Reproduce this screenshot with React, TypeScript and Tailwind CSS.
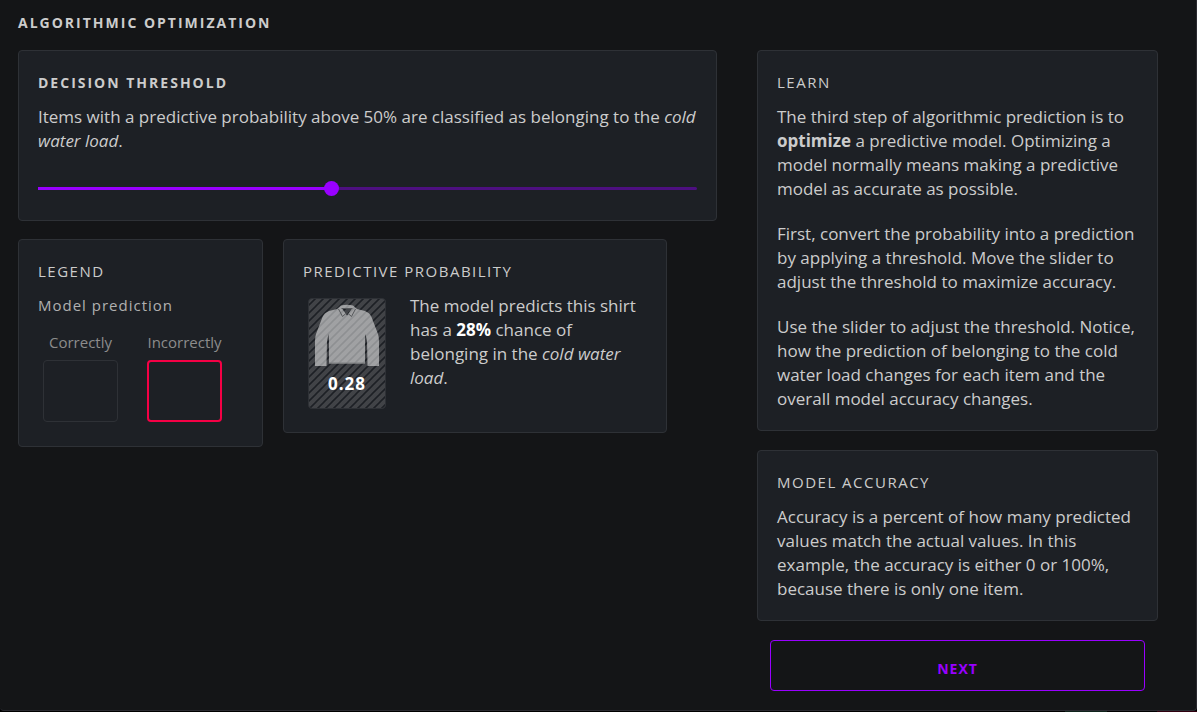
import { useState } from "react";
import type { ReactNode } from "react";

type CardProps = {
  id: string;
  title: string;
  bold?: boolean;
  className?: string;
  children: ReactNode;
};

function Card({ id, title, bold = false, className = "", children }: CardProps) {
  return (
    <section aria-labelledby={id} className={`rounded border border-[#2e3136] bg-[#1d2025] px-[19px] pt-5 ${className}`}>
      <h2 id={id} className={`uppercase ${bold ? "mb-[10px] text-sm leading-6 font-bold tracking-[2px]" : "mb-3 text-[15px] leading-[22px] font-normal tracking-[1.5px]"}`}>
        {title}
      </h2>
      {children}
    </section>
  );
}

function ShirtTile({ value }: { value: string }) {
  return (
    <div className="relative mt-1 ml-[5px] flex h-[111px] w-[78px] shrink-0 items-end justify-center overflow-hidden rounded border border-[#2e3136] bg-[#414347] pb-3">
      <svg viewBox="0 0 78 111" className="absolute -inset-px h-[111px] w-[78px]" aria-hidden="true">
        <defs>
          <pattern id="hatch" width="8" height="8" patternUnits="userSpaceOnUse">
            <path d="M-1 1 L1 -1 M-1 9 L9 -1 M7 9 L9 7" stroke="#1d2025" strokeWidth="1.6" />
          </pattern>
        </defs>
        <rect width="78" height="111" fill="url(#hatch)" />
        <g fill="#ffffff" fillOpacity="0.5">
          <path
            fillRule="evenodd"
            d="M33 7.5 Q39 6 45 7.5 L49 11 L57 13 Q62 15 63.5 19 L70 36 Q71 39 71 43 L71 68 L59.5 68 L59 43 L57.5 36 L57 41 L57 65.5 L21 65.5 L21 41 L20.5 36 L19 43 L18.5 68 L7 68 L7 43 Q7 39 8 36 L14.5 19 Q16 15 21 13 L29 11 Z M34 10.5 L39 17.5 L44 10.5 Z"
          />
        </g>
        <path d="M30.5 11 L34.5 18.5 L38.5 15 M47.5 11 L43.5 18.5 L39.5 15 M33.5 10.5 L44.5 10.5" fill="none" stroke="#55575a" strokeWidth="1" />
        <path d="M21 65 H57" stroke="#7d7e80" strokeWidth="1" />
      </svg>
      <strong className="relative text-[17px] leading-6 font-bold tracking-[1px] text-white">{value}</strong>
    </div>
  );
}

function LegendItem({ label, boxClass }: { label: string; boxClass: string }) {
  return (
    <li className="flex w-[75px] flex-col items-center gap-[7px]">
      <span className="text-[15px] leading-[22px] whitespace-nowrap">{label}</span>
      <span className={`h-[62px] w-full rounded ${boxClass}`} />
    </li>
  );
}

const MIN = 10;
const MAX = 100;

export default function App() {
  const [threshold, setThreshold] = useState(50);
  const filled = ((threshold - MIN) / (MAX - MIN)) * 100;

  return (
    <div className="flex min-h-screen flex-col bg-black font-['Open_Sans',sans-serif] text-[17px] leading-6 text-[#cccccc]">
      <main className="flex-1 rounded-b border-r border-b border-[#2a2a30] bg-[#141517] pr-[38px] pb-[19px] pl-[18px]">
        <h1 className="pt-[11px] text-sm leading-6 font-bold tracking-[2px] uppercase">Algorithmic Optimization</h1>
        <div className="mt-[15px] grid grid-cols-[minmax(0,1fr)_401px] items-start gap-10">
          <div className="flex flex-col gap-[18px]">
            <Card id="threshold-title" title="Decision Threshold" bold className="pb-6">
              <p>
                Items with a predictive probability above {threshold}% are classified as belonging to the <em>cold water load</em>.
              </p>
              <div className="relative mt-7 flex h-[15px] items-center">
                <div className="h-[3px] flex-1 rounded-r-sm bg-[#4d0f80]">
                  <div className="h-full bg-[#9900ff]" style={{ width: `${filled}%` }} />
                </div>
                <input
                  type="range"
                  min={MIN}
                  max={MAX}
                  value={threshold}
                  aria-labelledby="threshold-title"
                  onChange={(event) => setThreshold(Number(event.target.value))}
                  className="absolute inset-0 w-full cursor-pointer appearance-none bg-transparent [&::-webkit-slider-thumb]:size-[15px] [&::-webkit-slider-thumb]:appearance-none [&::-webkit-slider-thumb]:rounded-full [&::-webkit-slider-thumb]:bg-[#9900ff]"
                />
              </div>
            </Card>
            <div className="flex items-start gap-5">
              <Card id="legend-title" title="Legend" className="w-[245px] pb-6">
                <p className="text-[15px] leading-[22px] tracking-[1px] text-[#b0b0b0]">Model prediction</p>
                <ul className="mt-[15px] ml-[5px] flex gap-[29px] text-[#8c8c8c]">
                  <LegendItem label="Correctly" boxClass="border border-[#2e3136]" />
                  <LegendItem label="Incorrectly" boxClass="border-2 border-[#f50045]" />
                </ul>
              </Card>
              <Card id="probability-title" title="Predictive Probability" className="w-[384px] pb-[23px]">
                <div className="flex items-start gap-6">
                  <ShirtTile value="0.28" />
                  <p>
                    The model predicts this shirt has a <strong className="text-white">28%</strong> chance of belonging in the <em>cold water load</em>.
                  </p>
                </div>
              </Card>
            </div>
          </div>
          <div className="flex flex-col gap-[19px]">
            <Card id="learn-title" title="Learn" className="pb-[19px]">
              <div className="flex flex-col gap-[21px]">
                <p>
                  The third step of algorithmic prediction is to <strong>optimize</strong> a predictive model. Optimizing a model normally means making a predictive model as accurate as possible.
                </p>
                <p>First, convert the probability into a prediction by applying a threshold. Move the slider to adjust the threshold to maximize accuracy.</p>
                <p>Use the slider to adjust the threshold. Notice, how the prediction of belonging to the cold water load changes for each item and the overall model accuracy changes.</p>
              </div>
            </Card>
            <Card id="accuracy-title" title="Model Accuracy" className="pb-[19px]">
              <p>Accuracy is a percent of how many predicted values match the actual values. In this example, the accuracy is either 0 or 100%, because there is only one item.</p>
            </Card>
            <button type="button" className="mx-[13px] h-[51px] cursor-pointer rounded border border-[#9900ff] pt-[6px] text-sm font-bold tracking-[1px] text-[#9900ff] uppercase">
              Next
            </button>
          </div>
        </div>
      </main>
      <div className="flex h-px justify-end gap-[50px]">
        <span className="w-[42px] bg-[#10241c]" />
        <span className="w-[40px] bg-[#30000f]" />
      </div>
    </div>
  );
}
